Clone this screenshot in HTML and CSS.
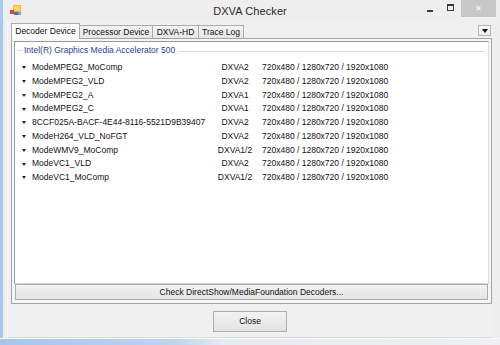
FILE: index.html
```html
<!DOCTYPE html>
<html>
<head>
<meta charset="utf-8">
<link rel="stylesheet" href="styles.css">
</head>
<body>
<div class="window">
  <div class="titlebar">
    <svg class="app-icon" width="11" height="11" viewBox="0 0 11 11">
      <rect x="3" y="0" width="8" height="7" fill="#f2b632"/>
      <rect x="4" y="1" width="6" height="5" fill="#f7d86a"/>
      <rect x="0" y="5" width="4" height="4" fill="#d9482b"/>
      <rect x="4" y="7" width="4" height="3" fill="#3a74c4"/>
      <rect x="8" y="7" width="3" height="3" fill="#8a9db8"/>
    </svg>
    <div class="title">DXVA Checker</div>
    <div class="controls">
      <span class="ctl ctl-min"><span class="min-bar"></span></span>
      <span class="ctl ctl-max"><span class="max-box"></span></span>
      <span class="ctl ctl-close">&#x2715;</span>
    </div>
  </div>
  <div class="client">
    <div class="tabstrip">
      <div class="tab active tab-w1">Decoder Device</div>
      <div class="tab tab-w2">Processor Device</div>
      <div class="tab tab-w3">DXVA-HD</div>
      <div class="tab tab-w4">Trace Log</div>
      <div class="tab-spacer"></div>
      <div class="drop-btn"><span class="drop-tri"></span></div>
    </div>
    <div class="tabpage">
      <div class="list">
        <div class="group-head">
          <span class="group-tick"></span>
          <span class="group-label">Intel(R) Graphics Media Accelerator 500</span>
          <span class="group-line"></span>
        </div>
        <div class="rows">
          <div class="row"><span class="tri"></span><span class="name">ModeMPEG2_MoComp</span><span class="type">DXVA2</span><span class="res">720x480 / 1280x720 / 1920x1080</span></div>
          <div class="row"><span class="tri"></span><span class="name">ModeMPEG2_VLD</span><span class="type">DXVA2</span><span class="res">720x480 / 1280x720 / 1920x1080</span></div>
          <div class="row"><span class="tri"></span><span class="name">ModeMPEG2_A</span><span class="type">DXVA1</span><span class="res">720x480 / 1280x720 / 1920x1080</span></div>
          <div class="row"><span class="tri"></span><span class="name">ModeMPEG2_C</span><span class="type">DXVA1</span><span class="res">720x480 / 1280x720 / 1920x1080</span></div>
          <div class="row"><span class="tri"></span><span class="name">8CCF025A-BACF-4E44-8116-5521D9B39407</span><span class="type">DXVA2</span><span class="res">720x480 / 1280x720 / 1920x1080</span></div>
          <div class="row"><span class="tri"></span><span class="name">ModeH264_VLD_NoFGT</span><span class="type">DXVA2</span><span class="res">720x480 / 1280x720 / 1920x1080</span></div>
          <div class="row"><span class="tri"></span><span class="name">ModeWMV9_MoComp</span><span class="type">DXVA1/2</span><span class="res">720x480 / 1280x720 / 1920x1080</span></div>
          <div class="row"><span class="tri"></span><span class="name">ModeVC1_VLD</span><span class="type">DXVA2</span><span class="res">720x480 / 1280x720 / 1920x1080</span></div>
          <div class="row"><span class="tri"></span><span class="name">ModeVC1_MoComp</span><span class="type">DXVA1/2</span><span class="res">720x480 / 1280x720 / 1920x1080</span></div>
        </div>
      </div>
      <div class="wide-btn">Check DirectShow/MediaFoundation Decoders...</div>
    </div>
    <div class="footer">
      <div class="close-btn">Close</div>
    </div>
  </div>
  <div class="bottom-frame"></div>
</div>
</body>
</html>
```
FILE: styles.css
```css
html, body {
  margin: 0;
  padding: 0;
  width: 500px;
  height: 345px;
  overflow: hidden;
  background: #f0f0f0;
}

.window {
  width: 500px;
  height: 345px;
  box-sizing: border-box;
  display: flex;
  flex-direction: column;
  background: #eeeeee;
  border-left: 3px solid #a9c8ea;
  font-family: "Liberation Sans", Arial, sans-serif;
  color: #1a1a1a;
}

/* Title bar */
.titlebar {
  height: 22px;
  flex: none;
  display: flex;
  align-items: flex-start;
  position: relative;
}
.app-icon {
  margin: 5px 0 0 7px;
  flex: none;
}
.title {
  position: absolute;
  left: -3px;
  right: 0;
  top: 5px;
  text-align: center;
  font-size: 11px;
  line-height: 13px;
  color: #2b2b2b;
  letter-spacing: 0.1px;
}
.controls {
  margin-left: auto;
  display: flex;
  align-items: flex-start;
  margin-right: 4px;
}
.ctl {
  display: flex;
  align-items: center;
  justify-content: center;
}
.ctl-min {
  width: 20px;
  height: 17px;
}
.min-bar {
  width: 6px;
  height: 2px;
  background: #3a3a3a;
  margin-top: 4px;
}
.ctl-max {
  width: 20px;
  height: 17px;
  margin-right: 1px;
}
.max-box {
  width: 5px;
  height: 4px;
  border: 1px solid #3a3a3a;
  border-top-width: 2px;
  margin-top: -3px;
}
.ctl-close {
  width: 35px;
  height: 17px;
  background: #c7c7c7;
  color: #ffffff;
  font-size: 8px;
  line-height: 17px;
}

/* Client area */
.client {
  flex: 1;
  display: flex;
  flex-direction: column;
  margin: 0 8px 0 4px;
  padding-left: 3px;
  border-bottom: 1px solid #dcdcdc;
  border-left: 1px solid #fafafa;
  background: #f0f0f0;
  font-size: 8.5px;
}

.tabstrip {
  height: 16px;
  flex: none;
  display: flex;
  align-items: flex-end;
  padding-right: 1px;
}
.tab {
  box-sizing: border-box;
  height: 13px;
  border: 1px solid #acacac;
  border-bottom: none;
  background: linear-gradient(#f3f3f3, #e6e6e6);
  text-align: center;
  line-height: 12px;
  margin-left: -1px;
  white-space: nowrap;
  color: #111;
}
.tab.active {
  height: 16px;
  margin-left: 0;
  margin-bottom: -1px;
  background: #fcfcfc;
  line-height: 15px;
  position: relative;
  z-index: 2;
}
.tab-w1 { width: 69px; }
.tab-w2 { width: 74px; }
.tab-w3 { width: 47px; }
.tab-w4 { width: 46px; }
.tab-spacer { flex: 1; }
.drop-btn {
  box-sizing: border-box;
  width: 13px;
  height: 11px;
  margin-bottom: 2px;
  border: 1px solid #b5b5b5;
  background: linear-gradient(#fbfbfb, #ececec);
  display: flex;
  align-items: center;
  justify-content: center;
}
.drop-tri {
  width: 0;
  height: 0;
  border-left: 3.5px solid transparent;
  border-right: 3.5px solid transparent;
  border-top: 4px solid #111;
}

.tabpage {
  box-sizing: border-box;
  width: 481px;
  height: 266px;
  flex: none;
  border: 1px solid #a3a3a3;
  background: #f6f6f6;
  padding: 2px 2px 3px 2px;
  display: flex;
  flex-direction: column;
  position: relative;
  z-index: 1;
}

.list {
  box-sizing: border-box;
  height: 243px;
  flex: none;
  background: #ffffff;
  border: 1px solid #9a9a9a;
  border-right-color: #d8d8d8;
  border-bottom-color: #d0d0d0;
  padding: 3px 4px 0 2px;
}

.group-head {
  display: flex;
  align-items: center;
  height: 11px;
}
.group-tick {
  width: 5px;
  border-top: 1px solid #dcdcdc;
  margin-right: 2px;
}
.group-label {
  color: #1f3f98;
  line-height: 11px;
  white-space: nowrap;
  padding-right: 3px;
}
.group-line {
  flex: 1;
  border-top: 1px solid #d7d7d7;
  margin-top: 1px;
}

.rows {
  margin-top: 5px;
}
.row {
  display: grid;
  grid-template-columns: 10px 180px 46px auto;
  align-items: center;
  height: 13.75px;
  line-height: 13.75px;
  padding-left: 5px;
  white-space: nowrap;
  color: #111;
}
.tri {
  width: 0;
  height: 0;
  border-left: 2.5px solid transparent;
  border-right: 2.5px solid transparent;
  border-top: 3.5px solid #222;
}
.type {
  text-align: center;
}
.res {
  padding-left: 4px;
}

.wide-btn {
  box-sizing: border-box;
  height: 16px;
  flex: none;
  margin: 0 1px;
  border: 1px solid #adadad;
  background: linear-gradient(#f2f2f2, #e3e3e3);
  text-align: center;
  line-height: 14px;
  color: #111;
}

.footer {
  flex: 1;
  display: flex;
  justify-content: center;
  align-items: flex-start;
  padding-top: 7px;
}
.close-btn {
  box-sizing: border-box;
  width: 74px;
  height: 21px;
  margin-left: -3px;
  border: 1px solid #adadad;
  background: linear-gradient(#f2f2f2, #e3e3e3);
  text-align: center;
  line-height: 19px;
  color: #111;
}

.bottom-frame {
  height: 6px;
  flex: none;
  margin-left: -3px;
  background: linear-gradient(90deg, #a6c6ea 0%, #bcd4ee 35%, #e6ecf3 45%, #eef0f2 100%);
  border-top: 1px solid #f7f7f7;
}
```
